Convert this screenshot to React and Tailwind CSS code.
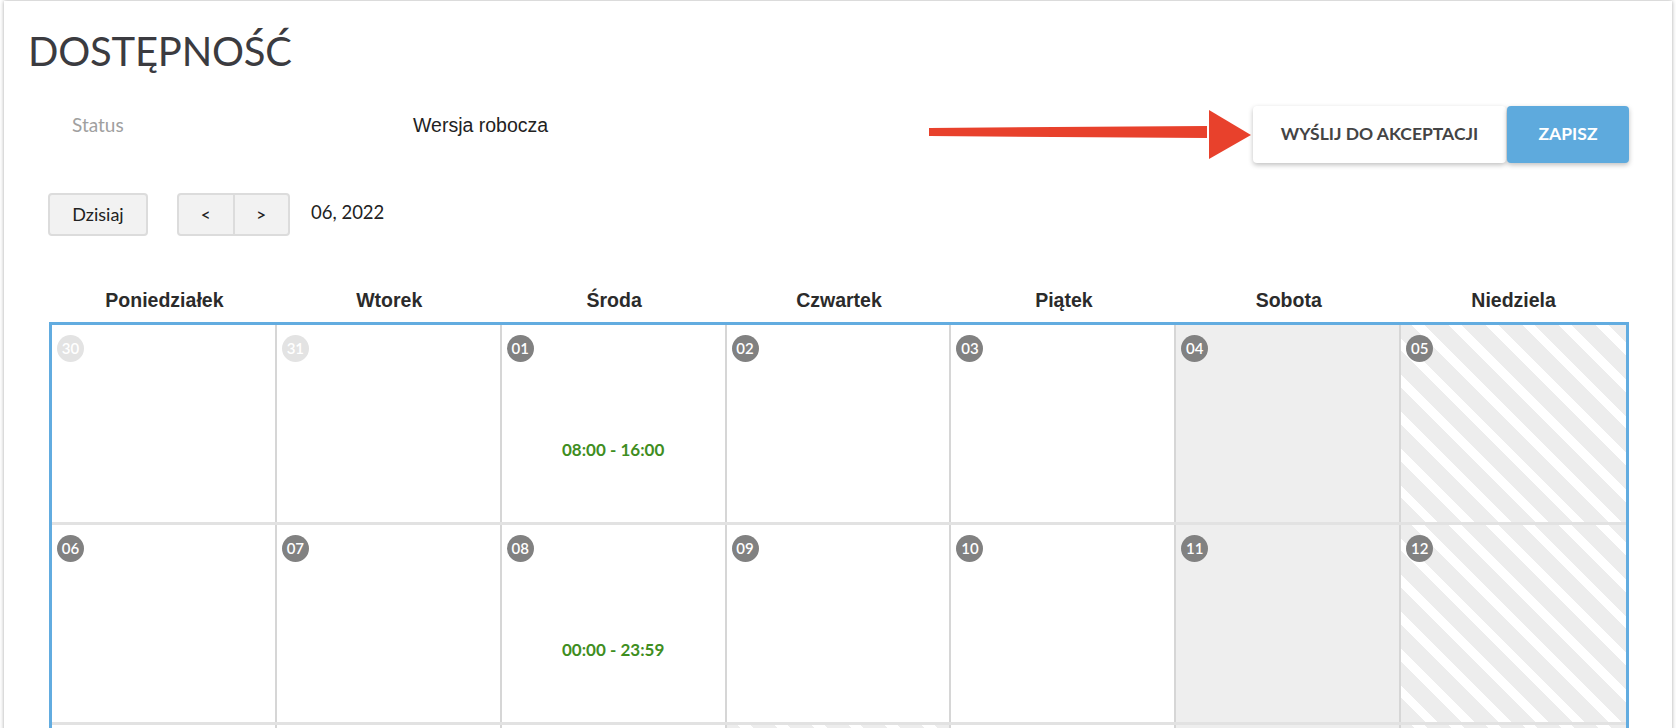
import React from 'react';

const days = ['Poniedziałek', 'Wtorek', 'Środa', 'Czwartek', 'Piątek', 'Sobota', 'Niedziela'];

const weeks = [
  [
    { n: '30', past: true },
    { n: '31', past: true },
    { n: '01', time: '08:00 - 16:00' },
    { n: '02' },
    { n: '03' },
    { n: '04' },
    { n: '05' },
  ],
  [
    { n: '06' },
    { n: '07' },
    { n: '08', time: '00:00 - 23:59' },
    { n: '09' },
    { n: '10' },
    { n: '11' },
    { n: '12' },
  ],
  [
    { n: '13' },
    { n: '14' },
    { n: '15' },
    { n: '16', off: true },
    { n: '17' },
    { n: '18' },
    { n: '19' },
  ],
];

const stripes = 'bg-[repeating-linear-gradient(45deg,#ededed_0px,#ededed_17px,#ffffff_17px,#ffffff_26px)]';

function DayCell({ day, col }) {
  let bg = 'bg-white';
  if (col === 5) bg = 'bg-[#eeeeee]';
  if (col === 6 || day.off) bg = stripes;

  return (
    <div className={`relative h-full ${bg} ${col < 6 ? 'border-r-2 border-[#d6d6d6]' : ''}`}>
      <div className="flex flex-col items-start pl-[5px] pt-[10px]">
        <span
          className={`flex h-[27px] w-[27px] items-center justify-center rounded-full text-[15px] font-semibold text-white ${
            day.past ? 'bg-[#e3e3e3]' : 'bg-[#818181]'
          }`}
        >
          {day.n}
        </span>
      </div>
      {day.time && (
        <div className="mt-[75px] text-center text-[17px] font-bold text-[#3f8e1f]">{day.time}</div>
      )}
    </div>
  );
}

export default function App() {
  return (
    <div className="min-h-screen bg-white font-['Lato','Liberation_Sans',sans-serif] pt-[1px]">
      <div className="relative mx-[4px] bg-white pl-[24px] pr-[43px] pb-10 shadow-[0_0_4px_rgba(0,0,0,0.35)]">
        <h1 className="pt-[26px] text-[40px] leading-[48px] font-normal tracking-[-0.2px] text-[#3b3b40]">DOSTĘPNOŚĆ</h1>

        {/* status row */}
        <div className="mt-[31px] flex items-start justify-between">
          <div className="flex pt-[9px] pl-[44px] text-[19px] leading-[20px]">
            <span className="w-[341px] text-[#a0a0a0]">Status</span>
            <span className="font-['Liberation_Sans',Arial,sans-serif] text-[19.5px] text-[#222]">Wersja robocza</span>
          </div>
          <div className="flex gap-[1px]">
            <button className="h-[57px] w-[253px] rounded-[4px] bg-white text-[17.5px] font-bold text-[#444] shadow-[0_2px_5px_rgba(0,0,0,0.25)]">
              WYŚLIJ DO AKCEPTACJI
            </button>
            <button className="h-[57px] w-[122px] rounded-[4px] bg-[#5eaadd] text-[17.5px] font-bold text-white shadow-[0_2px_5px_rgba(0,0,0,0.25)]">
              ZAPISZ
            </button>
          </div>
        </div>

        {/* toolbar */}
        <div className="mt-[30px] flex items-center pl-[20px] text-[18px] text-[#222]">
          <button className="h-[43px] w-[100px] rounded-[4px] border-2 border-[#dcdcdc] bg-[#f2f2f2]">Dzisiaj</button>
          <div className="ml-[29px] flex h-[43px] w-[113px] overflow-hidden rounded-[4px] border-2 border-[#dcdcdc] bg-[#f2f2f2]">
            <button className="flex-1 border-r-2 border-[#dcdcdc] text-[17px] font-semibold">&lt;</button>
            <button className="flex-1 text-[17px] font-semibold">&gt;</button>
          </div>
          <span className="ml-[21px] -mt-[4px] text-[18.5px]">06, 2022</span>
        </div>

        {/* calendar */}
        <div className="ml-[21px] mt-[44px]">
          <div className="grid h-[42px] grid-cols-7 items-center px-[3px] font-['Liberation_Sans',Arial,sans-serif] text-[19.5px] font-bold text-[#2b2b2b]">
            {days.map((d) => (
              <div key={d} className="text-center">
                {d}
              </div>
            ))}
          </div>
          <div className="border-[3px] border-[#62ace0]">
            {weeks.map((week, i) => (
              <div key={i} className="grid h-[200px] grid-cols-7 border-b-[3px] border-[#e2e2e2]">
                {week.map((day, j) => (
                  <DayCell key={day.n} day={day} col={j} />
                ))}
              </div>
            ))}
          </div>
        </div>

        {/* annotation arrow */}
        <svg
          className="pointer-events-none absolute left-[921px] top-[106px]"
          width="330"
          height="56"
          viewBox="0 0 330 56"
        >
          <polygon points="4,21 282,19 282,31 4,29" fill="#e8412c" />
          <polygon points="284,3 326,28 284,52" fill="#e8412c" />
        </svg>
      </div>
    </div>
  );
}
